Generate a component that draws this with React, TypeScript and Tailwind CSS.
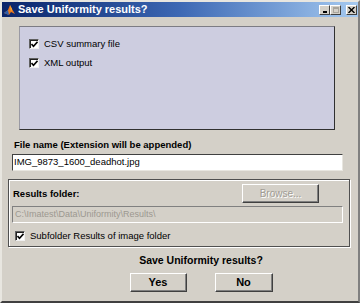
import { FC, ReactNode } from "react"

const font = "font-['Liberation_Sans',Arial,sans-serif]"

const Check: FC<{ checked?: boolean }> = ({ checked = true }) => (
  <span className="flex h-[10px] w-[10px] shrink-0 items-center justify-center border border-t-[#606060] border-l-[#606060] border-b-[#f0f0f0] border-r-[#f0f0f0] bg-white shadow-[inset_1px_1px_0_#202020]">
    {checked && (
      <svg width="7" height="7" viewBox="0 0 7 7">
        <path d="M0.5 3 L2.5 5.2 L6.5 0.8" stroke="#000" strokeWidth="1.6" fill="none" />
      </svg>
    )}
  </span>
)

const CheckRow: FC<{ label: string }> = ({ label }) => (
  <div className="flex items-center gap-[5px]">
    <Check />
    <span className="text-[9.5px] leading-[12px] text-black">{label}</span>
  </div>
)

const Button: FC<{ children: ReactNode; disabled?: boolean; className?: string }> = ({
  children,
  disabled,
  className = "",
}) => (
  <div
    className={`flex items-center justify-center border border-t-white border-l-white border-b-[#404040] border-r-[#404040] bg-[#d4d0c8] shadow-[inset_-1px_-1px_0_#808080] ${className}`}
  >
    {disabled ? (
      <span className="text-[10px] text-[#a09c94] [text-shadow:1px_1px_0_#fff]">{children}</span>
    ) : (
      <span className="text-[11px] font-bold text-black">{children}</span>
    )}
  </div>
)

const TitleButton: FC<{ children: ReactNode }> = ({ children }) => (
  <div className="flex h-[10px] w-[11px] items-center justify-center border border-t-white border-l-white border-b-[#404040] border-r-[#404040] bg-[#d4d0c8]">
    {children}
  </div>
)

export default function App() {
  return (
    <div className={`${font} h-[303px] w-[360px] overflow-hidden bg-[#d4d0c8]`}>
      <div className="flex h-full w-full flex-col border-2 border-t-[#e8e6e0] border-l-[#e8e6e0] border-b-[#404040] border-r-[#808080]">
        {/* title bar */}
        <div className="flex h-[15px] shrink-0 items-center bg-gradient-to-r from-[#0a246a] via-[#3d68b4] to-[#a6caf0] pl-[2px] pr-[1px]">
          <svg width="11" height="12" viewBox="0 0 11 12">
            <path d="M0 9 L4 6 L6 1 L8 5 L11 10 L7 8 L5 11 Z" fill="#e8761c" />
            <path d="M0 9 L4 6 L5 11 Z" fill="#2b5fb0" />
            <path d="M6 1 L8 5 L7 8 Z" fill="#f7b13a" />
          </svg>
          <span className="ml-[3px] text-[11px] font-bold leading-none text-white">Save Uniformity results?</span>
          <div className="flex-1" />
          <div className="flex items-center">
            <TitleButton>
              <span className="mt-[4px] block h-[2px] w-[4px] bg-black" />
            </TitleButton>
            <TitleButton>
              <span className="block h-[6px] w-[6px] border border-t-2 border-[#a8a49c]" />
            </TitleButton>
            <div className="ml-[5px]">
              <TitleButton>
                <svg width="7" height="6" viewBox="0 0 7 6">
                  <path d="M0.5 0 L6.5 6 M6.5 0 L0.5 6" stroke="#000" strokeWidth="1.4" />
                </svg>
              </TitleButton>
            </div>
          </div>
        </div>

        {/* options panel */}
        <div className="ml-[17px] mt-[9px] h-[104px] w-[316px] border border-t-[#7c7c84] border-l-[#9a9aa4] border-b-[#303030] border-r-[#303030] bg-[#cdcde0] pl-[9px] pt-[11px]">
          <div className="flex flex-col gap-[7px]">
            <CheckRow label="CSV summary file" />
            <CheckRow label="XML output" />
          </div>
        </div>

        {/* file name */}
        <div className="ml-[12px] mt-[8px] text-[9.5px] font-bold leading-[14px] text-black">
          File name (Extension will be appended)
        </div>
        <div className="ml-[10px] mt-[2px] flex h-[17px] w-[331px] items-center border border-t-[#404040] border-l-[#404040] border-b-[#e8e6e0] border-r-[#e8e6e0] bg-white pl-[1px]">
          <span className="text-[9.5px] text-black">IMG_9873_1600_deadhot.jpg</span>
        </div>

        {/* results folder group */}
        <div className="ml-[6px] mt-[8px] flex h-[68px] w-[342px] flex-col border border-[#505050] shadow-[inset_1px_1px_0_#fff,1px_1px_0_#fff] px-[3px]">
          <div className="mt-[4px] flex items-center justify-between">
            <span className="ml-[1px] text-[9.5px] font-bold leading-[14px] text-black">Results folder:</span>
            <Button disabled className="mr-[27px] h-[19px] w-[77px]">
              Browse...
            </Button>
          </div>
          <div className="mt-[3px] flex h-[17px] w-[331px] items-center border border-t-[#808080] border-l-[#808080] border-b-white border-r-white pl-[2px]">
            <span className="text-[9px] text-[#9c9890]">C:\Imatest\Data\Uniformity\Results\</span>
          </div>
          <div className="ml-[3px] mt-[7px]">
            <CheckRow label="Subfolder Results of image folder" />
          </div>
        </div>

        {/* confirm */}
        <div className="ml-[98px] mt-[6px] flex w-[202px] flex-col items-center">
          <span className="text-[10.5px] font-bold leading-[14px] text-black">Save Uniformity results?</span>
          <div className="mt-[6px] flex gap-[28px]">
            <Button className="h-[19px] w-[57px]">Yes</Button>
            <Button className="h-[19px] w-[58px]">No</Button>
          </div>
        </div>
      </div>
    </div>
  )
}
